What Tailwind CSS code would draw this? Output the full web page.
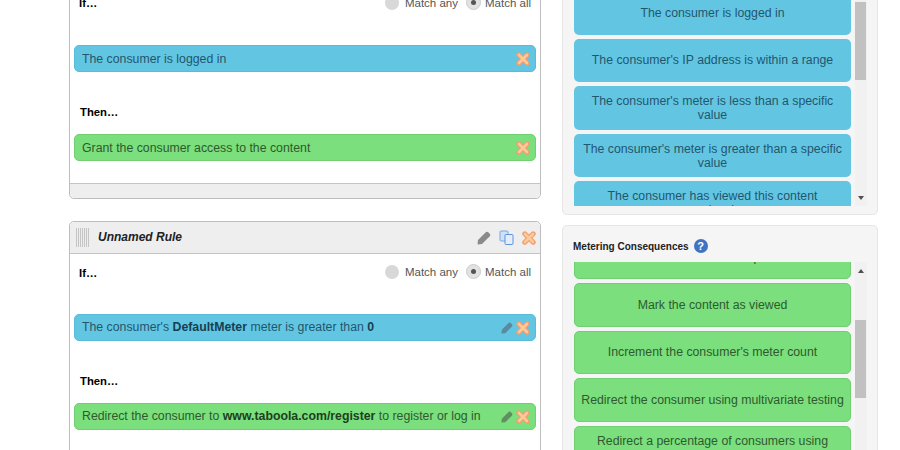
<!DOCTYPE html>
<html lang="en">
<head>
<meta charset="UTF-8" />
<title>Metering Rules</title>
<script src="https://cdn.jsdelivr.net/npm/@tailwindcss/browser@4"></script>
</head>
<body class="bg-white">
<svg width="0" height="0" class="absolute">
  <defs>
    <symbol id="x" viewBox="0 0 14 14">
      <path d="M2.800 2.800 L11.200 11.200 M11.200 2.800 L2.800 11.200" stroke="#f59c6c" stroke-width="5" stroke-linecap="round" fill="none"/>
      <path d="M3 3 L11 11 M11 3 L3 11" stroke="#fcc99a" stroke-width="2.600" stroke-linecap="round" fill="none"/>
    </symbol>
    <symbol id="pencil" viewBox="0 0 14 14">
      <path d="M0.500 13.500 L1 9 L8.800 1.200 Q10 0.300 11 1 L13 3 Q13.700 4 12.800 5.200 L5 13 Z" fill="currentColor"/>
    </symbol>
  </defs>
</svg>
<div class="h-[450px] w-[900px] overflow-hidden flex items-start gap-[21px] pl-[69px] font-['Liberation_Sans',Arial,sans-serif] text-[12.300px] text-[#333]">

  <!-- rules -->
  <div class="w-[472px] flex flex-col gap-[22px]">
    <div class="-mt-[20px] h-[219px] border border-[#bdbdbd] rounded-b-[5px] bg-white flex flex-col">
      <div class="flex-1 px-[4px] flex flex-col">
        <div class="h-[33px] flex items-end justify-between pl-[5px] pr-[5px] pb-[4px]">
          <span class="text-[11.300px] font-bold text-black leading-[14px]">If…</span>
          <div class="flex items-center text-[#555] text-[11.500px] leading-[14px]">
            <span class="w-[14px] h-[14px] rounded-full bg-[#d8d8d8] mr-[6px]"></span>
            <span class="mr-[8px]">Match any</span>
            <span class="w-[15px] h-[15px] rounded-full bg-[#e2e2e2] border border-[#ccc] flex items-center justify-center mr-[4px]"><span class="w-[5px] h-[5px] rounded-full bg-[#555]"></span></span>
            <span>Match all</span>
          </div>
        </div>
        <div class="mt-[31px] h-[27px] rounded-[5px] bg-[#62c6e2] border border-[#58bcd8] flex items-center justify-between pl-[7px] pr-[5px] text-[#22566e]">
          <span class="mt-[1px]">The consumer is logged in</span>
          <svg class="w-[14px] h-[14px]"><use href="#x"/></svg>
        </div>
        <div class="mt-[33px] pl-[6px] text-[11.300px] font-bold text-black leading-[14px]">Then…</div>
        <div class="mt-[15px] h-[27px] rounded-[5px] bg-[#7adf7c] border border-[#6fcf71] flex items-center justify-between pl-[7px] pr-[5px] text-[#2f5a2f]">
          <span class="mt-[1px]">Grant the consumer access to the content</span>
          <svg class="w-[14px] h-[14px]"><use href="#x"/></svg>
        </div>
      </div>
      <div class="h-[15px] bg-[#eeeeee] border-t border-[#c4c4c4] rounded-b-[5px]"></div>
    </div>

    <div class="h-[260px] border border-[#bdbdbd] rounded-t-[5px] bg-white flex flex-col">
      <div class="h-[32px] bg-[#eeeeee] border-b border-[#c4c4c4] rounded-t-[5px] flex items-center pl-[6px] pr-[4px] shrink-0">
        <span class="w-[13px] h-[19px] bg-[repeating-linear-gradient(90deg,#9a9a9a_0_1px,transparent_1px_2px)] opacity-50"></span>
        <span class="ml-[9px] -mt-[1px] flex-1 text-[12px] font-bold italic text-[#222]">Unnamed Rule</span>
        <svg class="w-[14px] h-[14px] text-[#8a8a8a]"><use href="#pencil"/></svg>
        <svg class="ml-[8px] w-[15px] h-[15px]" viewBox="0 0 15 15">
          <rect x="1" y="1" width="8" height="10" rx="1" fill="#cfe0f7" stroke="#7ba6e0"/>
          <rect x="6" y="4.500" width="8" height="10" rx="1" fill="#e4eefb" stroke="#5f93da"/>
        </svg>
        <svg class="ml-[8px] w-[14px] h-[14px]"><use href="#x"/></svg>
      </div>
      <div class="flex-1 px-[4px] flex flex-col">
        <div class="h-[33px] flex items-end justify-between pl-[5px] pr-[5px] pb-[7px]">
          <span class="text-[11.300px] font-bold text-black leading-[14px]">If…</span>
          <div class="flex items-center mb-[1px] text-[#555] text-[11.500px] leading-[14px]">
            <span class="w-[14px] h-[14px] rounded-full bg-[#d8d8d8] mr-[6px]"></span>
            <span class="mr-[8px]">Match any</span>
            <span class="w-[15px] h-[15px] rounded-full bg-[#e2e2e2] border border-[#ccc] flex items-center justify-center mr-[4px]"><span class="w-[5px] h-[5px] rounded-full bg-[#555]"></span></span>
            <span>Match all</span>
          </div>
        </div>
        <div class="mt-[27px] h-[27px] rounded-[5px] bg-[#62c6e2] border border-[#58bcd8] flex items-center pl-[7px] pr-[5px] text-[#22566e]">
          <span class="flex-1">The consumer's <b class="text-[#173f52]">DefaultMeter</b> meter is greater than <b class="text-[#173f52]">0</b></span>
          <svg class="w-[12px] h-[12px] text-[#5a8a9c] mr-[3px]"><use href="#pencil"/></svg>
          <svg class="w-[14px] h-[14px]"><use href="#x"/></svg>
        </div>
        <div class="mt-[33px] pl-[6px] text-[11.300px] font-bold text-black leading-[14px]">Then…</div>
        <div class="mt-[15px] h-[27px] rounded-[5px] bg-[#7adf7c] border border-[#6fcf71] flex items-center pl-[7px] pr-[5px] text-[#2f5a2f]">
          <span class="flex-1">Redirect the consumer to <b class="text-[#1d3f1d]">www.taboola.com/register</b> to register or log in</span>
          <svg class="w-[12px] h-[12px] text-[#5f8f60] mr-[3px]"><use href="#pencil"/></svg>
          <svg class="w-[14px] h-[14px]"><use href="#x"/></svg>
        </div>
      </div>
    </div>
  </div>

  <!-- palettes -->
  <div class="w-[316px] flex flex-col gap-[10px]">
    <div class="-mt-[20px] h-[235px] bg-[#f5f5f5] border border-[#e6e6e6] rounded-[5px] pt-[19px] pl-[11px] pr-[10px]">
      <div class="h-[206px] flex gap-[4px]">
        <div class="w-[277px] h-full overflow-hidden flex flex-col justify-end gap-[4px] text-center text-[#22566e]">
          <div class="shrink-0 h-[43.600px] rounded-[5px] bg-[#62c6e2] flex items-center justify-center px-[4px] leading-[14px]">The consumer is logged in</div>
          <div class="shrink-0 h-[43.600px] rounded-[5px] bg-[#62c6e2] flex items-center justify-center px-[4px] leading-[14px]">The consumer's IP address is within a range</div>
          <div class="shrink-0 h-[43.600px] rounded-[5px] bg-[#62c6e2] flex items-center justify-center px-[4px] leading-[14px]">The consumer's meter is less than a specific value</div>
          <div class="shrink-0 h-[43.600px] rounded-[5px] bg-[#62c6e2] flex items-center justify-center px-[4px] leading-[14px]">The consumer's meter is greater than a specific value</div>
          <div class="shrink-0 h-[24.700px] overflow-hidden rounded-t-[5px] bg-[#62c6e2] px-[30px] pt-[8px] leading-[14px]">The consumer has viewed this content previously</div>
        </div>
        <div class="w-[12px] h-full bg-[#f1f1f1] flex flex-col justify-between">
          <div class="mt-[2px] w-[11px] h-[78px] bg-[#c1c1c1]"></div>
          <div class="h-[17px] flex items-center justify-center"><span class="border-x-[3px] border-x-transparent border-t-[4px] border-t-[#505050]"></span></div>
        </div>
      </div>
    </div>

    <div class="h-[240px] bg-[#f5f5f5] border border-[#e6e6e6] rounded-t-[5px] pl-[11px] pr-[10px]">
      <div class="h-[36px] flex items-center pt-[4px] -ml-[1px] text-[10px] font-bold text-[#222]">
        <span class="leading-[14px] mt-[1px]">Metering Consequences</span>
        <span class="ml-[5px] w-[14px] h-[14px] rounded-full bg-[#3f74c4] text-white flex items-center justify-center text-[11px] leading-none">?</span>
      </div>
      <div class="h-[188px] flex gap-[4px]">
        <div class="w-[277px] h-full overflow-hidden flex flex-col gap-[4px] text-center text-[#2f5a2f]">
          <div class="shrink-0 -mt-[26.500px] h-[43.600px] rounded-[5px] bg-[#7adf7c] border border-[#6fcf71] flex items-center justify-center px-[4px] leading-[14px]">Show a content template</div>
          <div class="shrink-0 h-[43.600px] rounded-[5px] bg-[#7adf7c] border border-[#6fcf71] flex items-center justify-center px-[4px] leading-[14px]">Mark the content as viewed</div>
          <div class="shrink-0 h-[43.600px] rounded-[5px] bg-[#7adf7c] border border-[#6fcf71] flex items-center justify-center px-[4px] leading-[14px]">Increment the consumer's meter count</div>
          <div class="shrink-0 h-[43.600px] rounded-[5px] bg-[#7adf7c] border border-[#6fcf71] flex items-center justify-center px-[4px] leading-[14px]">Redirect the consumer using multivariate testing</div>
          <div class="shrink-0 h-[43.600px] rounded-[5px] bg-[#7adf7c] border border-[#6fcf71] flex items-center justify-center px-[4px] leading-[14px]">Redirect a percentage of consumers using multivariate testing</div>
        </div>
        <div class="w-[12px] h-full bg-[#f1f1f1] flex flex-col">
          <div class="h-[17px] flex items-center justify-center"><span class="border-x-[3px] border-x-transparent border-b-[4px] border-b-[#505050]"></span></div>
          <div class="mt-[41px] w-[11px] h-[78px] bg-[#c1c1c1]"></div>
        </div>
      </div>
    </div>
  </div>
</div>
</body>
</html>
